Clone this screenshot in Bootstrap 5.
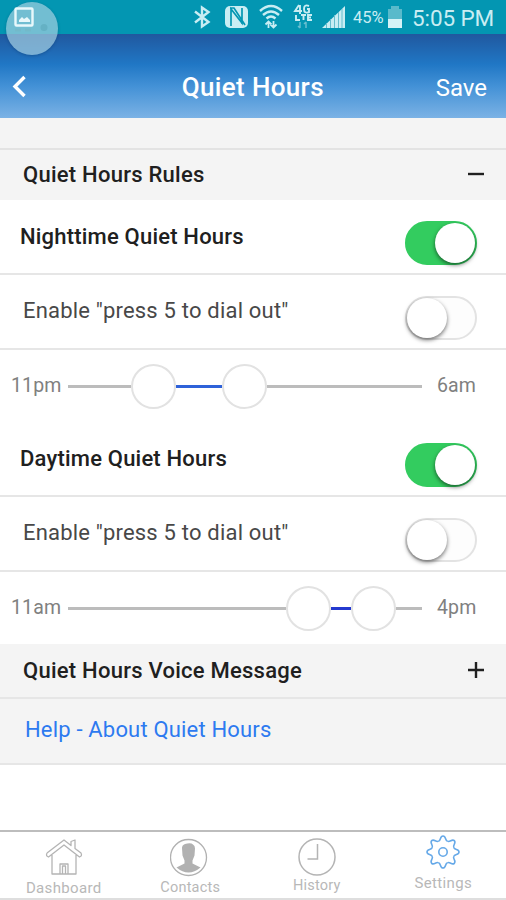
<!DOCTYPE html>
<html lang="en">
<head>
<meta charset="utf-8">
<meta name="viewport" content="width=device-width, initial-scale=1">
<title>Quiet Hours</title>
<link rel="stylesheet" href="https://cdn.jsdelivr.net/npm/bootstrap@5.3.0/dist/css/bootstrap.min.css">
<style>
body{font-family:Roboto,"Liberation Sans",sans-serif;background:#fff;color:#202020;width:506px;height:900px;overflow:hidden;line-height:1}
svg{display:block;flex:none}
.status{height:34px;background:#0396b2;color:#c9edf3;padding-right:12px}
.pct{font-size:16.5px;margin-left:3px;width:34px;padding-top:3px}
.clock{font-size:22.5px;letter-spacing:-.1px;margin-left:9px;width:82px;padding-top:3px}
.bubble{left:6px;top:2px;width:52px;height:53px;background:rgba(168,209,225,.68);box-shadow:0 1px 3px rgba(0,40,80,.3)}
.head{height:84px;background:linear-gradient(#20589f 0,#2077c5 36%,#4391d6 62%,#7bb2e5 100%);color:#fff;padding:23px 19px 0 12px}
.head h1{font-size:26px;font-weight:500;letter-spacing:.35px;padding-left:3px}
.save{font-size:24px;color:#fff}
.spacer{height:32px;background:#f4f4f4;border-bottom:2px solid #e3e3e3}
.sect{background:#f4f4f4;padding:0 21px 0 23px;font-size:22px;font-weight:500;letter-spacing:.25px}
.line{border-bottom:2px solid #e6e6e6}
.opt{height:75px;font-size:22px;padding:0 29px 0 20px;letter-spacing:.2px}
.opt .lab{font-weight:500}
.opt .sub{color:#484848;padding-left:3px;padding-bottom:1px}
.switch{width:72px;height:44px;margin-top:12px;border-radius:22px;border:2px solid #e3e3e3;background:#fdfdfd;padding:0}
.switch i{display:block;width:40px;height:40px;border-radius:50%;background:#fff;box-shadow:0 2px 4px rgba(0,0,0,.55)}
.switch.on{background:#33cc5f;border-color:#33cc5f;justify-content:flex-end}
.range{height:72px;font-size:19.5px;color:#808080;letter-spacing:.15px;padding:0 12px 0 11px}
.range .from{width:57px;flex:none}.range .to{margin-left:15px}
.track{width:354px;flex:none}
.track i{height:3px;background:#bcbcbc;flex:none}
.track i.fill{background:#2f62d9}
.track i.deep{background:#2439cf}
.track b{width:45px;height:45px;border-radius:50%;border:2px solid #e2e2e2;background:#fff;flex:none}
.help{height:66px;background:#f4f4f4;color:#2d7af0;font-size:22px;letter-spacing:.18px;padding:0 25px 3px;border-bottom:2px solid #e6e6e6}
.tabs{height:70px;border-top:2px solid #bdbdbd;border-bottom:2px solid #dedede;font-size:15px;color:#b8b8b8;letter-spacing:.35px}
.tabs a{color:inherit;width:126.5px;padding-left:1px}
.tabs span{padding-top:1px}
.tabs .snug{font-size:14.5px;letter-spacing:.2px}
</style>
<script src="https://cdn.jsdelivr.net/npm/bootstrap@5.3.0/dist/js/bootstrap.bundle.min.js"></script>
</head>
<body class="d-flex flex-column position-relative">
<div class="status d-flex align-items-center justify-content-end">
  <svg width="215" height="34" viewBox="0 0 215 34" fill="none" stroke="#c9edf3" stroke-width="2.400">
    <path d="M60 11.500l13.500 10.500-6.500 4.500v-19l6.500 4.500L60 22.500"/>
    <rect x="90" y="6" width="23" height="22" rx="5" fill="#c9edf3" stroke="none"/>
    <path d="M96 26V9l11 14V8M95 8l4 0 11 17M107 8v16" stroke="#0396b2" stroke-width="1.700"/>
    <path d="M125 11q11-10 22 0M128 15q8-7 16 0M131.500 18.500q4.500-4 9 0"/>
    <path d="M133.500 28v-6M138.500 21v6M130.500 24.500l3-3 3 3M135.500 24.500l3 3 3-3" stroke-width="1.800"/>
    <path d="M164 5l-4 6h7M165 5v9M174 6q-5-2-5 3t5 3v-3h-2M161 15v5h4M166 15h5M168.500 15v5M177 15h-4v5h4M173 17.500h3" stroke-width="1.900"/>
    <path d="M165 22v6m-2-2l2 2M171 28v-6m-2 2l2-2" stroke="#68bfd0" stroke-width="1.500"/>
    <path d="M187 28h23V6z" fill="#c9edf3" stroke="none"/>
    <path d="M191.500 23v5M195.500 19v9M199.500 15v13M203.500 12v16M207 9v19" stroke="#67bdcd" stroke-width="1"/>
  </svg>
  <span class="pct text-nowrap">45%</span>
  <svg width="16" height="34" viewBox="0 0 16 34"><path d="M4 6h8v3h3v19H1V9h3z" fill="#59bacb"/><path d="M1 19h14v9H1z" fill="#d5f3f7"/></svg>
  <span class="clock text-nowrap">5:05 PM</span>
</div>
<div class="bubble position-absolute rounded-circle">
  <svg width="52" height="53" viewBox="0 0 52 53"><rect x="9.500" y="6.500" width="17" height="17" rx="1" fill="none" stroke="#e8f8fb" stroke-width="2.400"/><path d="M13 20v-2l3-3 2 2 3-2 3 3v2z" fill="#e8f8fb"/><circle cx="38" cy="25.500" r="3.500" fill="#65b1c4"/><path d="M9 28h6M19 28h6" stroke="#73b9ca" stroke-width="3"/></svg>
</div>
<header class="head d-flex align-items-center justify-content-between">
  <svg width="55" height="26" viewBox="0 0 55 26" fill="none" stroke="#fff" stroke-width="3.400"><path d="M12.500 2L3 11.500l9.500 9.500"/></svg>
  <h1 class="m-0 text-nowrap">Quiet Hours</h1>
  <a class="save text-decoration-none" href="#">Save</a>
</header>
<div class="spacer"></div>
<div class="sect d-flex align-items-center justify-content-between" style="height:50px">Quiet Hours Rules
  <svg width="18" height="18" viewBox="0 0 18 18"><path d="M1 8h16" stroke="#202020" stroke-width="2.400"/></svg></div>
<div id="rules"></div>
<div class="sect line d-flex align-items-center justify-content-between" style="height:55px">Quiet Hours Voice Message
  <svg width="18" height="18" viewBox="0 0 18 18"><path d="M1 8h16M9 0v16" stroke="#202020" stroke-width="2.400"/></svg></div>
<a class="help d-flex align-items-center text-decoration-none" href="#">Help - About Quiet Hours</a>
<nav class="tabs d-flex mt-auto">
  <a class="d-flex flex-column align-items-center text-decoration-none" href="#">
    <svg width="40" height="48" viewBox="0 0 40 48" fill="none" stroke="#b4b4b4" stroke-width="1.300" stroke-linejoin="round"><path d="M3 21L20 8l7 5.500V9.500l4-1.500v8.500l6 4.500q1.500 3-1.500 4L20 13 4.500 25q-3-1-1.500-4M8 23v19h24V23M16 42V32h8v10M18.500 42v-8h3v8"/></svg><span>Dashboard</span></a>
  <a class="d-flex flex-column align-items-center text-decoration-none" href="#">
    <svg width="40" height="48" viewBox="0 0 40 48" fill="none"><g transform="translate(-1.500)"><path d="M13.500 16q0-3 3-4 6-1.500 8 .5 2 1 2 4l-.5 7-2 5v3l8 4q-12 10-24 0l8-4v-3l-2-5-.5-7.500z" fill="#b1b1b1"/><circle cx="20" cy="25.500" r="18" stroke="#b1b1b1" stroke-width="1.300"/></g></svg><span class="snug">Contacts</span></a>
  <a class="d-flex flex-column align-items-center text-decoration-none" href="#">
    <svg width="40" height="46" viewBox="0 0 40 46" fill="none" stroke="#b4b4b4" stroke-width="1.500"><circle cx="20" cy="25" r="18"/><path d="M20.500 12v15h-10"/></svg><span class="snug">History</span></a>
  <a class="d-flex flex-column align-items-center text-decoration-none" href="#">
    <svg width="40" height="43" viewBox="-20 -20 40 43" fill="none" stroke="#66a9e8" stroke-width="1.600"><defs><path id="tooth" d="M-4.500-10.800C-1.700-11.500-3.300-16 0-16S1.700-11.500 4.500-10.800"/></defs>
    <g id="gear"></g><circle r="4.200"/></svg><span>Settings</span></a>
</nav>
<script>
const rule=(name,from,to,a,b,c,shade)=>`
<div class="opt line d-flex align-items-center justify-content-between"><span class="lab">${name}</span><span class="switch on d-flex"><i></i></span></div>
<div class="opt line d-flex align-items-center justify-content-between"><span class="sub">Enable "press 5 to dial out"</span><span class="switch d-flex"><i></i></span></div>
<div class="range d-flex align-items-center"><span class="from">${from}</span><div class="track d-flex align-items-center"><i style="width:${a}px"></i><b></b><i class="fill ${shade}" style="width:${b}px"></i><b></b><i style="width:${c}px"></i></div><span class="to">${to}</span></div>`;
document.getElementById('rules').innerHTML=rule('Nighttime Quiet Hours','11pm','6am',63,46,155,'')+rule('Daytime Quiet Hours','11am','4pm',218,20,26,'deep');
document.getElementById('gear').innerHTML=[0,45,90,135,180,225,270,315].map(d=>`<use href="#tooth" transform="rotate(${d})"/>`).join('');
</script>
</body>
</html>
